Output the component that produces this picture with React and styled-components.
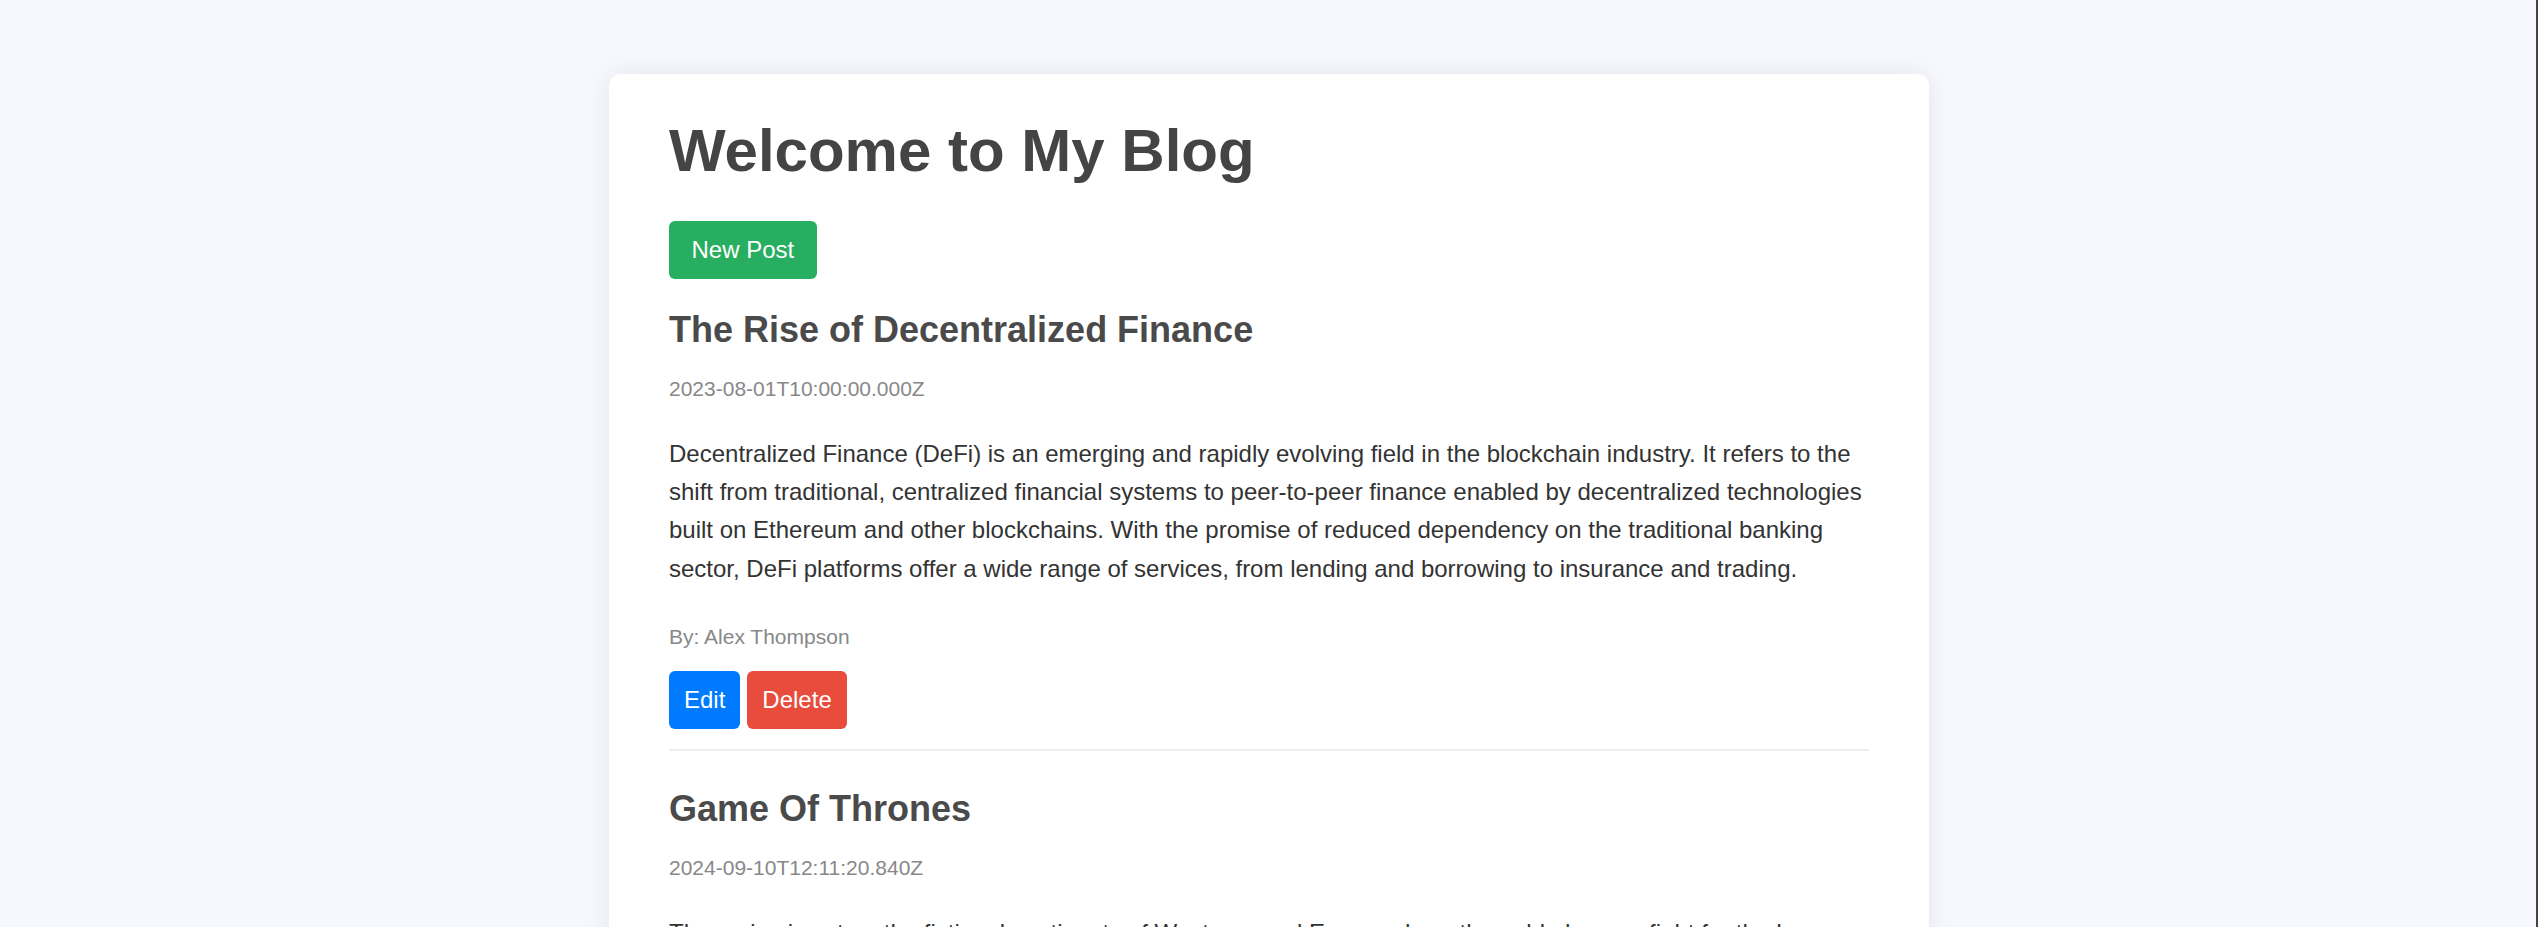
import React from "react";
import styled, { createGlobalStyle } from "styled-components";

const GlobalStyle = createGlobalStyle`
  html, body {
    margin: 0;
    padding: 0;
  }
  body {
    background: #f7f8fd;
    font-family: "Liberation Sans", Arial, sans-serif;
    min-height: 100vh;
    box-shadow: inset -2px 0 0 #444;
  }
`;

const Page = styled.div`
  padding: 74px 0 60px;
`;

const Card = styled.main`
  max-width: 1200px;
  margin: 0 auto;
  padding: 42px 60px 60px;
  background: #fff;
  border-radius: 12px;
  box-shadow: 0 0 24px rgba(0, 0, 0, 0.08);
`;

const Heading = styled.h1`
  margin: 0 0 36px;
  font-size: 60px;
  font-weight: 700;
  color: #444;
`;

const Button = styled.button`
  font-family: inherit;
  font-size: 24px;
  line-height: 1.15;
  padding: 15px ${(p) => (p.$wide ? "22.5px" : "15px")};
  border: none;
  border-radius: 6px;
  color: #fff;
  background: ${(p) => p.$color};
  cursor: pointer;
`;

const NewButton = styled(Button)`
  display: block;
  margin-bottom: 30px;
`;

const Post = styled.article`
  padding-bottom: 20px;
  border-bottom: 2px solid #eee;
  margin-bottom: 37px;
`;

const PostTitle = styled.h2`
  margin: 0 0 26px;
  font-size: 36px;
  font-weight: 700;
  color: #4a4a4a;
`;

const Meta = styled.p`
  margin: 0 0 ${(p) => p.$gap}px;
  font-size: 21px;
  color: #888;
`;

const Body = styled.p`
  margin: 0 0 37px;
  font-size: 24px;
  line-height: 1.6;
  color: #333;
`;

const Actions = styled.div`
  display: flex;
  gap: 7px;
`;

const posts = [
  {
    title: "The Rise of Decentralized Finance",
    date: "2023-08-01T10:00:00.000Z",
    body:
      "Decentralized Finance (DeFi) is an emerging and rapidly evolving field in the blockchain industry. It refers to the shift from traditional, centralized financial systems to peer-to-peer finance enabled by decentralized technologies built on Ethereum and other blockchains. With the promise of reduced dependency on the traditional banking sector, DeFi platforms offer a wide range of services, from lending and borrowing to insurance and trading.",
    author: "Alex Thompson",
  },
  {
    title: "Game Of Thrones",
    date: "2024-09-10T12:11:20.840Z",
    body:
      "The series is set on the fictional continents of Westeros and Essos, where the noble houses fight for the Iron Throne while an ancient threat rises beyond the Wall in the far north of the realm.",
    author: "George Martin",
  },
];

export default function App() {
  return (
    <Page>
      <GlobalStyle />
      <Card>
        <Heading>Welcome to My Blog</Heading>
        <NewButton $color="#27ae60" $wide>
          New Post
        </NewButton>
        {posts.map((post) => (
          <Post key={post.title}>
            <PostTitle>{post.title}</PostTitle>
            <Meta $gap={34}>{post.date}</Meta>
            <Body>{post.body}</Body>
            <Meta $gap={22}>By: {post.author}</Meta>
            <Actions>
              <Button $color="#007bff">Edit</Button>
              <Button $color="#e74c3c">Delete</Button>
            </Actions>
          </Post>
        ))}
      </Card>
    </Page>
  );
}
